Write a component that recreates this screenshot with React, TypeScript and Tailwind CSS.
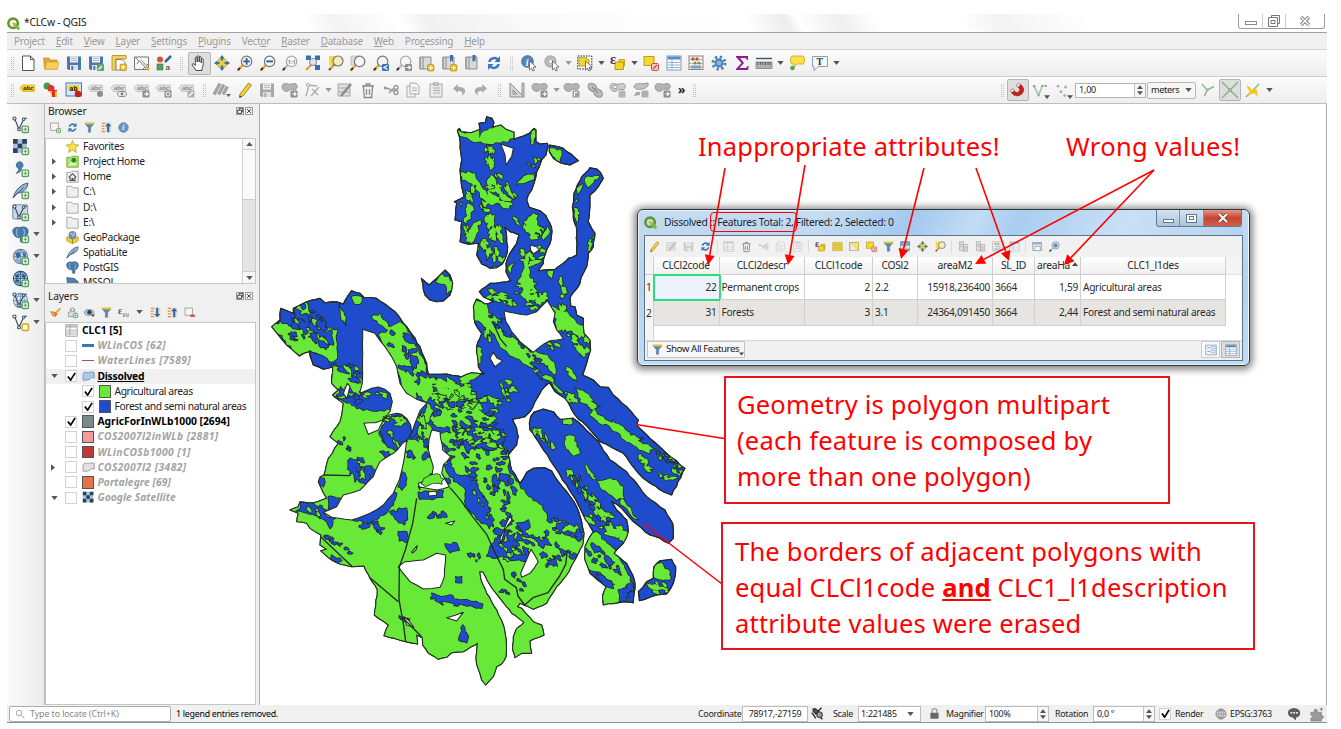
import React from "react";

/* ---------- icons, drawn on a 16 x 16 grid ---------- */
const glass = (c: string, h = "#e8a820") => (
  <>
    <path d="M1 15l5-5" stroke={h} strokeWidth="2.4" strokeLinecap="round" />
    <path d="M1 15l2-2" stroke="#333" strokeWidth="2" />
    <circle cx="9.6" cy="6.4" r="5.2" fill="#f4f6f8" stroke={c} strokeWidth="1.2" />
  </>
);
const plus = (x: number, y: number, c = "#5a9e5f") => (
  <>
    <rect x={x} y={y} width="6" height="6" rx="1" fill="#f2fbf2" stroke={c} strokeWidth="1.3" />
    <path d={`M${x + 3} ${y + 1.4}v3.2M${x + 1.4} ${y + 3}h3.2`} stroke={c} strokeWidth="1" />
  </>
);
const star = (x: number, y: number) => (
  <>
    <rect x={x} y={y} width="6.5" height="6.5" rx="1.2" fill="#e6b422" stroke="#b88a10" strokeWidth=".6" />
    <path d={`M${x + 3.2} ${y + 1}v4.4M${x + 1} ${y + 3.2}h4.4`} stroke="#fff" strokeWidth="1.2" />
  </>
);
const greyBadge = (x: number, y: number) => (
  <>
    <rect x={x} y={y} width="7" height="7" rx="1.2" fill="#8d8d8d" />
    <path d={`M${x + 1.5} ${y + 3.5}h4M${x + 3.6} ${y + 1.6}l2 1.9-2 1.9`} stroke="#fff" strokeWidth="1.1" fill="none" />
  </>
);
const floppy = (c: string) => (
  <>
    <path d="M1 1.5h14v13.5H2.5L1 13.5z" fill={c} />
    <rect x="4" y="1.5" width="8" height="6" fill="#eef1f4" />
    <path d="M5 3.4h6M5 5.4h6" stroke="#aaa" strokeWidth=".8" />
    <rect x="4" y="10" width="8" height="5" fill="#dde2e8" />
    <rect x="5.3" y="11" width="2" height="4" fill={c} />
  </>
);
const label = (c: string, t: string) => (
  <>
    <path d="M0 6l2.500-3H14.500v6.500H2.500z" fill={c} stroke={t === "#222" ? "#c9a300" : "#aaa"} strokeWidth=".6" />
    <text x="3" y="8.300" fontSize="6" fontWeight="700" fontStyle="italic" fontFamily="Liberation Sans, sans-serif" fill={t}>abc</text>
  </>
);
const book = (
  <>
    <path d="M2 2h11v12H2z" fill="#d9d9d9" stroke="#8c8c8c" />
    <path d="M5 2v12M2 2v12" stroke="#8c8c8c" />
  </>
);
const shape = (
  <path d="M0 5C0 1 4 1 6.500 2c3 1 5-1.500 7.500 0 2.500 2 1 6-2 5.500-3-.5-4 0-5 1C5 10.500 0 9 0 5z" fill="#b3b3b3" stroke="#8e8e8e" strokeWidth=".8" />
);
const refresh = (
  <>
    <path d="M2.2 7A6 6 0 0 1 12 3.2L14 1v6H8.4l2-2A3.8 3.8 0 0 0 4.6 7z" fill="#3a78c0" />
    <path d="M13.8 9A6 6 0 0 1 4 12.8L2 15V9h5.6l-2 2a3.8 3.8 0 0 0 5.8-2z" fill="#3a78c0" />
  </>
);
const vee = (
  <>
    <path d="M2.5 2.5l4 10 4.5-9.5c1-1.5 2-1.3 3-.5" fill="none" stroke="#3d4d5c" strokeWidth="1.1" />
    <circle cx="2.3" cy="2.4" r="1.5" fill="#fff" stroke="#3d4d5c" />
    <circle cx="6.6" cy="12.6" r="1.3" fill="#fff" stroke="#3d4d5c" />
    <circle cx="11" cy="3" r="1.2" fill="#fff" stroke="#3d4d5c" />
  </>
);
const funnel = (
  <>
    <path d="M1.5 2.5h13L9.7 8.2V15H6.3V8.2z" fill="#5c87b8" stroke="#3f6a98" strokeWidth=".6" />
    <path d="M1.5 1h13v2.3h-13z" fill="#f0d83c" stroke="#b9a020" strokeWidth=".5" />
  </>
);
const elephant = (
  <>
    <path d="M.8 4c1-3 4-3.200 6.500-2.500 3-1.300 7.900-.8 7.900 3.500 0 2-1 4-2 5l-2.200.3V14c0 1.800-3 2-3.200 0v-4l-1.600 1-1.600-.4C2 10 .4 6 .8 4z" fill="#4a7aac" stroke="#2f5680" strokeWidth=".7" />
    <path d="M5 2.500c-1 3-1 5 .5 7.500M10.800 2.500c1.500 3 1 5-.2 7.500" stroke="#c7d8ea" strokeWidth=".7" fill="none" />
  </>
);
const feather = <path d="M1 15C3 8 8 2 15 1c0 4-3 7-5 8-2 1-4 1.500-5 1.500zM1 15L11 5" fill="#8fb4d8" stroke="#40566c" strokeWidth=".9" />;
const globe = (c = "#8fb5da", s = "#3d668f") => (
  <>
    <circle cx="8" cy="8" r="6.7" fill={c} stroke={s} />
    <path d="M8 1.3v13.4M1.3 8h13.4M3 4h10M3 12h10M8 1.3c-5 4-5 9 0 13.4M8 1.3c5 4 5 9 0 13.4" fill="none" stroke={s} strokeWidth=".7" />
  </>
);
const raster = (
  <>
    <rect x="1" y="1" width="13" height="13" fill="#a9c1da" />
    <path d="M1 1h4.3v4.3H1zM9.6 1H14v4.3H9.6zM5.3 5.3h4.3v4.3H5.3zM1 9.6h4.3V14H1zM9.6 9.6H14V14H9.6z" fill="#27415f" />
  </>
);
const selBox = <rect x="1" y="1.5" width="10" height="9" fill="#f7d72e" stroke="#a98d10" strokeWidth=".8" />;
const gtable = (c: string, s: string) => (
  <>
    <rect x="1" y="1" width="14" height="14" fill="#fff" stroke={s} />
    <rect x="1.500" y="1.500" width="13" height="3" fill={c} />
    <path d="M1.5 7.5h13M1.5 10h13M1.5 12.5h13M6 2v12" stroke={s} strokeWidth=".8" />
  </>
);
const cursor = <path d="M8.5 6l6.5 6-3 .4 1.4 2.8-1.6.8-1.4-2.9-2 1.9z" fill="#fff" stroke="#444" strokeWidth=".7" />;

const ICONS: Record<string, React.ReactNode> = {
  new: <path d="M2.5 1h8l3.5 3.5V15.500H2.500zM10.500 1v3.500H14" fill="#fff" stroke="#555" />,
  open: (
    <>
      <path d="M0.500 3h5.500l1.500 2H14v9H1.500z" fill="#d8a93a" stroke="#b98818" strokeWidth=".6" />
      <path d="M2 14.300L3.500 7H16l-1.500 7.300z" fill="#f8cf58" stroke="#c79b2c" strokeWidth=".6" />
    </>
  ),
  save: floppy("#4c79a8"),
  saveas: <>{floppy("#4c79a8")}<rect x="9" y="9" width="7" height="7" rx="1" fill="#5fa567" /><path d="M10.500 14.500l3.500-3.500" stroke="#fff" strokeWidth="1.400" /></>,
  layout: (
    <>
      <path d="M1 .5h14v3.500H5v11H1z" fill="#f2d35c" stroke="#a88a20" strokeWidth=".8" />
      <path d="M5 4.500h6l3 3V15H5z" fill="#fff" stroke="#777" strokeWidth=".9" />
      {star(9, 9)}
    </>
  ),
  layoutmgr: (
    <>
      <path d="M.5 2h14v12.500H.5z" fill="#f5f5f5" stroke="#777" />
      <path d="M1 2l4 4-2 3M9 14l5-5" stroke="#5580aa" fill="none" />
      <path d="M6 5.500l7 7" stroke="#888" strokeWidth="2.600" /><path d="M6 5.500l7 7" stroke="#eee" strokeWidth="1.200" /><path d="M12 12l3 3" stroke="#e4b430" strokeWidth="3" />
    </>
  ),
  style: (
    <>
      <circle cx="4" cy="4.500" r="3" fill="#d8532c" /><path d="M9 7l6-6" stroke="#3a6591" strokeWidth="2.500" />
      <rect x="1" y="9" width="6" height="6" fill="#5a9e5f" stroke="#3c7440" strokeWidth=".6" />
      <text x="9.500" y="15" fontSize="8" fontFamily="Liberation Sans, sans-serif" fill="#222">a</text>
    </>
  ),
  hand: (
    <path d="M5 15.500c-1-2-3-4-3.700-5.500-.5-1.300.8-1.800 1.800-.8l1.200 1.300V3.200c0-1.400 1.900-1.400 1.900 0V7 1.800c0-1.400 2-1.400 2 0V7l.1-4.500c0-1.300 1.900-1.300 1.900 0V8l.2-3.600c.1-1.200 1.800-1.100 1.800.1 0 4 .2 7-1.200 9v2z" fill="#fff" stroke="#333" strokeWidth=".9" />
  ),
  pan: (
    <>
      <path d="M4 4h8v8H4z" fill="#f0d03a" stroke="#b99818" strokeWidth=".5" />
      <path d="M8 0l2.600 3.400H9v2H7v-2H5.400zM8 16l-2.600-3.400H7v-2h2v2h1.600zM0 8l3.400-2.600V7h2v2h-2v1.600zM16 8l-3.400-2.600V7h-2v2h2v1.600z" fill="#3b6fa5" />
    </>
  ),
  zin: <>{glass("#777")}<path d="M9.600 3v6.800M6.200 6.400H13" stroke="#2b62a0" strokeWidth="1.900" /></>,
  zout: <>{glass("#777")}<path d="M6.200 6.400H13" stroke="#2b62a0" strokeWidth="1.900" /></>,
  z1: <>{glass("#aaa", "#bbb")}<text x="5.800" y="8.600" fontSize="5.500" fontWeight="700" fill="#888">1:1</text></>,
  zfull: <><path d="M1 0.500h5v4.500H1zM10 0.500h5v4.500h-5zM10 10h5v5h-5z" fill="#3b6fa5" /><path d="M4 3l8 9M12 3L5 11" stroke="#3b6fa5" strokeWidth="1.800" /><circle cx="8" cy="7" r="3.500" fill="#dfe8f1" stroke="#888" /><path d="M1 15l4-4" stroke="#e8a820" strokeWidth="2.400" /></>,
  zsel: <><path d="M1 1h8v9H1z" fill="#f5dc3c" /><path d="M1 15l5-5" stroke="#444" strokeWidth="2" /><path d="M2.500 13.500l3-3" stroke="#e8a820" strokeWidth="2.400" /><circle cx="10" cy="6" r="5" fill="#f3ecb8" stroke="#777" strokeWidth="1.200" /></>,
  zlayer: <><path d="M1 1h8v9H1z" fill="#ddd" stroke="#aaa" strokeWidth=".6" />{glass("#777")}</>,
  zlast: <>{glass("#777")}<rect x="9" y="9" width="7" height="7" rx="1" fill="#3b74b0" /><path d="M14.500 10.500l-3.600 2 3.600 2" stroke="#fff" fill="none" strokeWidth="1.200" /></>,
  znext: <>{glass("#aaa", "#bbb")}{greyBadge(9, 9)}</>,
  bmnew: <>{book}{star(9.500, 9.500)}</>,
  bmnew2: <>{book}<path d="M9 0h3v7l-1.500-1.500L9 7z" fill="#3b6fa5" />{star(9.500, 9.500)}</>,
  bm: <>{book}<path d="M8.500 0h3v7L10 5.500 8.500 7z" fill="#3b6fa5" /></>,
  refresh,
  info: <><circle cx="6.500" cy="6.500" r="6" fill="#5584b6" stroke="#365f8c" strokeWidth=".6" /><text x="4.800" y="10.500" fontSize="10" fontWeight="700" fontStyle="italic" fontFamily="Liberation Serif, serif" fill="#fff">i</text>{cursor}</>,
  action: <><circle cx="6.500" cy="6.500" r="5" fill="#d0d0d0" stroke="#b0b0b0" strokeWidth="2.400" /><circle cx="6.500" cy="6.500" r="2.500" fill="#eee" stroke="#999" />{cursor}</>,
  select: <><rect x="0.800" y="1" width="14" height="13" fill="none" stroke="#222" strokeWidth="1" strokeDasharray="1.500 1.200" /><path d="M2 4V2.500h8v2h2V11H2z" fill="#f4d52c" stroke="#a88e18" strokeWidth=".7" />{cursor}</>,
  expr: <><path d="M5 7h8.500v7.500H5z" fill="#f4d52c" stroke="#b6930c" strokeWidth=".9" /><path d="M9 7v-2.500h5.500V11h-1V7z" fill="#f4d52c" stroke="#b6930c" strokeWidth=".8" /><text x="0" y="9" fontSize="14" fontWeight="700" fontFamily="Liberation Serif, serif" fill="#5b2c70">ε</text></>,
  desel: <>{selBox}<rect x="8.500" y="8.500" width="7" height="7" rx="1.200" fill="#f7c8c8" stroke="#d04848" /><path d="M10 14l4-4" stroke="#d04848" strokeWidth="1.200" /></>,
  table: gtable("#5b8bc0", "#7b9fc6"),
  abacus: <><rect x="1" y="1" width="14" height="13.500" fill="none" stroke="#888" /><path d="M1 4.500h14M1 8.500h14M1 12h14" stroke="#999" strokeWidth=".7" /><circle cx="5" cy="4" r="1.700" fill="#d04a3a" /><circle cx="9" cy="4" r="1.700" fill="#d04a3a" /><circle cx="7" cy="8" r="1.600" fill="#5aa35c" /><circle cx="11" cy="8" r="1.600" fill="#5aa35c" /><path d="M3 10.500h10v3H3z" fill="#7d9fc4" /></>,
  gear: <><circle cx="8" cy="8" r="6" fill="none" stroke="#4a7ebb" strokeWidth="3" strokeDasharray="2.200 2.510" /><circle cx="8" cy="8" r="3.500" fill="#8eb3dd" stroke="#4a7ebb" strokeWidth="2" /></>,
  sigma: <path d="M2 1h12v4h-1c-.5-1.500-1-2-3-2H6l4 5-4.600 5H11c1.500 0 2.200-.8 2.700-2h1L14 15H2v-1l5.500-6L2 2z" fill="#8f1a96" />,
  ruler: <><path d="M0 3.500h16" stroke="#35597d" strokeWidth="1.400" /><rect x="0" y="7" width="16" height="6.500" fill="#b0b0b0" stroke="#777" strokeWidth=".7" /><path d="M2 7v3M4.500 7v3M7 7v3M9.500 7v3M12 7v3M14 7v3" stroke="#444" strokeWidth=".8" /></>,
  tip: <><path d="M3 1h11c2 0 2 8 0 8H8l-3 3V9H3C1 9 1 1 3 1z" fill="#f7e04c" stroke="#c4a81c" strokeWidth=".8" /><circle cx="3.500" cy="13" r="2.300" fill="#5a9e5f" /></>,
  text: <><path d="M0.500 1.500h15v10H6l-4 4v-4H0.500z" fill="#f2f6fa" stroke="#8296a8" strokeWidth=".9" /><text x="4.500" y="10" fontSize="9.500" fontFamily="Liberation Serif, serif" fill="#333" fontWeight="700">T</text></>,
  abc: label("#f7d72e", "#222"),
  diag: <><circle cx="4" cy="4" r="3.500" fill="#3da046" /><path d="M8 1v8H6z" fill="#e7c22a" /><circle cx="8" cy="6.500" r="3.500" fill="#d33" /><path d="M9 8h5v7H9z" fill="#d6302b" /><path d="M12 9h2v6h-2zM6 9l3 5v-5z" fill="#e9c22b" /></>,
  abcpin: <><rect x="0" y="1" width="15.500" height="13" fill="#d8e6f8" stroke="#3e79c5" /><path d="M1 6l2-3h10v6H3z" fill="#f7d72e" /><text x="3.500" y="8.500" fontSize="6.500" fontWeight="700" fill="#222">ab</text><circle cx="12" cy="12" r="3.300" fill="#c4201c" /></>,
  abcg1: <>{label("#e2e2e2", "#888")}<circle cx="12" cy="12" r="3" fill="#8a8a8a" /></>,
  abcg2: <>{label("#e2e2e2", "#888")}<ellipse cx="11" cy="12" rx="4.600" ry="2.600" fill="#eee" stroke="#888" /><circle cx="11" cy="12" r="1.400" fill="#777" /></>,
  abcg3: <>{label("#e2e2e2", "#888")}{greyBadge(8.500, 8.500)}</>,
  abcg4: <>{label("#e2e2e2", "#888")}<rect x="8.500" y="8.500" width="7" height="7" rx="1" fill="#8d8d8d" /><circle cx="12" cy="12" r="2" fill="none" stroke="#fff" /></>,
  abcg5: <>{label("#e2e2e2", "#888")}<rect x="8.500" y="8.500" width="7" height="7" rx="1" fill="#b0b0b0" /><path d="M10 14l4-4" stroke="#fff" strokeWidth="1.500" /></>,
  pens: <><path d="M0 12.500L6 1.500M4.500 12.500L10 2.500M9 12.500l4.500-8" stroke="#a3a3a3" strokeWidth="3.400" /><path d="M12 12h5l-2.500 3z" fill="#666" /></>,
  pencil: <><path d="M3 12L11.500 1l3 2L6 14l-3.500 1.500z" fill="#f2cf3a" stroke="#8f7615" strokeWidth=".8" /><path d="M2.500 15.500l.3-2L4.500 15z" fill="#222" /></>,
  saveg: floppy("#a8a8a8"),
  shapeg: <>{shape}{greyBadge(8.500, 8.500)}</>,
  shapeh: <>{shape}<rect x="8.500" y="8.500" width="7" height="7" rx="1.200" fill="#a0a0a0" /><path d="M10.500 14v-3.500h3" stroke="#fff" fill="none" /></>,
  shapei: <><path d="M0 5C0 1 4 1 6.500 2c3 1 5-1.500 7.500 0 2.500 2 1 6-2 5.500-3-.5-4 0-5 1C5 10.500 0 9 0 5z" fill="#cfcfcf" stroke="#999" /><ellipse cx="5" cy="5" rx="2.500" ry="1.800" fill="#eee" stroke="#999" /><rect x="8.500" y="8.500" width="7" height="7" rx="1.200" fill="#b5b5b5" /></>,
  vert: <><path d="M2 3l10 1M4 3L1 14M14 5L6 14M7 7l6 6" stroke="#aaa" strokeWidth="1.300" fill="none" /><circle cx="3" cy="3" r="1.600" fill="#eee" stroke="#aaa" /></>,
  edit: <><rect x="1" y="2" width="12" height="12" fill="#ddd" stroke="#aaa" /><path d="M1 6h12M1 10h12" stroke="#aaa" /><path d="M4 14L14 2" stroke="#8b8b8b" strokeWidth="2.500" /></>,
  trash: <path d="M2 4h12M6 4V2h4v2M3.500 4.500l.8 11h7.400l.8-11M6.500 7v6M9.500 7v6" fill="none" stroke="#8a8a8a" strokeWidth="1.300" />,
  cut: <><path d="M1 5l10 4M1 6.500h3M6 11l5-5" stroke="#9b9b9b" strokeWidth="1.500" /><circle cx="13" cy="5.500" r="2" fill="none" stroke="#9b9b9b" strokeWidth="1.400" /><circle cx="13" cy="10.500" r="2" fill="none" stroke="#9b9b9b" strokeWidth="1.400" /></>,
  copy: <path d="M5 1h6l3 3v8H5zM5 4H2v11h8v-3M7 6h5M7 8.500h5" fill="#f5f5f5" stroke="#aaa" />,
  paste: <><rect x="2" y="2" width="12" height="13" fill="#ececec" stroke="#aaa" /><path d="M5.500 0.800h5v2.500h-5zM5 6h7M5 8.500h7M5 11h7" stroke="#aaa" fill="#ccc" /></>,
  undo: <path d="M2 6.500l5-4.500v3c6 0 7.500 2 7 5-.5 2-2 3-3.500 3.500 2-2.500 1-4.500-3.500-4.500V11z" fill="#ababab" />,
  redo: <path d="M14 6.500l-5-4.500v3c-6 0-7.500 2-7 5 .5 2 2 3 3.500 3.500-2-2.500-1-4.500 3.500-4.500V11z" fill="#ababab" />,
  setsq: <path d="M1 1v14h14zM4 8v4h4zM15 15V1h-2v12" fill="#d5d5d5" stroke="#8f8f8f" />,
  chain: <><ellipse cx="5.500" cy="5.500" rx="5" ry="3.600" transform="rotate(40 5.500 5.500)" fill="#bbb" stroke="#8e8e8e" /><ellipse cx="11" cy="11" rx="5" ry="3.600" transform="rotate(40 11 11)" fill="#bbb" stroke="#8e8e8e" /><path d="M5 5l6 6" stroke="#777" /></>,
  split: <><path d="M1 5c0-4 6-4 8-3l6-1c1 3-2 5-4 5.500S4 9 1 5z" fill="#c2c2c2" stroke="#999" /><rect x="8.500" y="8.500" width="7" height="7" rx="1.200" fill="#b0b0b0" /><path d="M1 14c1-4 3-5 6-4v3z" fill="#aaa" /></>,
  magnet: <><path d="M10.500 2.500c5 3.500 3.500 9.500-1.500 11-3 1-6-.3-7.500-3l2.800-1.700c1 1.800 2.700 2.200 4.200 1.200 1.800-1.300 1.600-3.400-.3-4.700z" fill="#cf1a1a" stroke="#8c0d0d" strokeWidth=".6" /><path d="M8.200 5.300l2.300-2.800L8.300 1 6.300 3.900zM4.300 8.800l-2.800 1.700L.4 8.200 3.200 6.700z" fill="#fff" stroke="#a33" strokeWidth=".6" /></>,
  snapv: <><path d="M2 3l5 10L11 3l4 0" fill="none" stroke="#9ccb9c" strokeWidth="1.700" /><path d="M1 2h2.500v2.500H1zM10 2h2v2h-2zM6 12h2v2H6zM14 2h2v2h-2z" fill="#999" /></>,
  snapd: <path d="M2 2h2.600v2.600H2zM10 3h2.600v2.600H10zM5 8h2.600v2.600H5zM9 12h2.600v2.600H9z" fill="#aaa" />,
  topo: <><path d="M1 1l6 7 8-4M7 8L4 15" stroke="#86bd86" strokeWidth="1.700" fill="none" /><path d="M5.500 6.500h3v3h-3z" fill="#aaa" /></>,
  inter: <><path d="M0 0l16 16M16 0L0 16" stroke="#86bd86" strokeWidth="1.700" /><path d="M6.500 6.500h3v3h-3z" fill="#bbb" stroke="#888" strokeWidth=".5" /></>,
  trace: <><path d="M1 15L15 1" stroke="#86bd86" strokeWidth="1.500" /><path d="M1 2l5 3 1 3 5-3 1 6 1 4-4-4-4 1-3 2 2-5z" fill="#f3c81c" /></>,
  vadd: <>{vee}{plus(9.500, 9.500)}</>,
  rasteradd: <>{raster}{plus(9.500, 9.500)}</>,
  comma: <><path d="M4 5a3.200 3.200 0 1 1 5 2.500C9 10 7 12 4 12.500c2-1.500 2.600-3 2.500-4.400A3.200 3.200 0 0 1 4 5z" fill="#4d7db0" stroke="#30567e" strokeWidth=".7" />{plus(9.500, 9.500)}</>,
  feathadd: <>{feather}{plus(9.500, 9.500)}</>,
  vbox: <><rect x=".7" y=".7" width="14" height="13.500" rx="1.500" fill="#c8d8e8" stroke="#7a95ad" />{vee}{plus(9.500, 9.500)}</>,
  pgadd: <>{elephant}{plus(9.500, 9.500)}</>,
  wmsadd: <>{globe("#b9cfe4", "#6688aa")}<path d="M3 5l4-1 1 3-2 3-2-2zM10 4l3 1v3l-2 1z" fill="#3d6a98" />{plus(9.500, 9.500)}</>,
  wcsadd: <>{globe("#cfe0f0", "#24507c")}<path d="M3 5h4v2H3zM9 5h4v2H9zM3 9h4v2H3z" fill="#24507c" />{plus(9.500, 9.500)}</>,
  wfsadd: <>{globe("#d5e4f2", "#6f95ba")}{vee}{plus(9.500, 9.500)}</>,
  vnew: <>{vee}<rect x="9.500" y="9.500" width="6" height="6" rx="1" fill="#fff8d0" stroke="#d3a91c" strokeWidth="1.400" /></>,
  addsel: <><rect x="1" y="1.500" width="11" height="10.500" fill="#f5f5f5" stroke="#888" />{plus(9.500, 9.500)}</>,
  funnel,
  collapse: <><path d="M1 2h5M1 6h4M1 10h4M1 14h5" stroke="#e58b2a" strokeWidth="2" /><path d="M6 1h9v14H6z" fill="#d9dee4" /><path d="M10.500 1l4.500 5h-3v9H9V6H6z" fill="#3b6591" /></>,
  expand: <><path d="M1 2h5M1 6h4M1 10h4M1 14h5" stroke="#e58b2a" strokeWidth="2" /><path d="M6 1h9v14H6z" fill="#d9dee4" /><path d="M10.500 15l4.500-5h-3V1H9v9H6z" fill="#3b6591" /></>,
  infob: <><circle cx="8" cy="8" r="6.800" fill="#6a96c4" stroke="#3d6a98" /><text x="6" y="12" fontSize="11" fontStyle="italic" fontWeight="700" fontFamily="Liberation Serif, serif" fill="#fff">i</text></>,
  brush: <><path d="M8 9l7-7" stroke="#e8a838" strokeWidth="3" /><path d="M0 6l6 1 5 3-3 4-4-1z" fill="#d9622c" /><path d="M3 8l4 4" stroke="#f4d03a" strokeWidth="2" /></>,
  group: <><path d="M2 14V8l3-1V3h6v4l2 1v6z" fill="#d9dde1" stroke="#7a848e" /><circle cx="8" cy="4" r="2.500" fill="#eee" stroke="#777" />{plus(9.500, 9.500)}</>,
  eye: <><ellipse cx="7.500" cy="8" rx="7" ry="4.300" fill="#b4c4d4" stroke="#7b8896" /><circle cx="8" cy="7.500" r="3.300" fill="#28425e" /><path d="M10 11h6l-3 4z" fill="#555" /></>,
  eps: <><text x="0" y="10.500" fontSize="14" fontWeight="700" fontFamily="Liberation Serif, serif" fill="#5a4a66">ε</text><path d="M8 9v5h2v-4h3v4h2V9" fill="none" stroke="#777" /></>,
  remove: <><rect x="1.500" y="1.500" width="11" height="10.500" fill="#f5f5f5" stroke="#888" /><rect x="9" y="11" width="7" height="3.500" rx="1" fill="#e24a4a" /></>,
  fav: <path d="M8 .6l2.100 5.200 5.600.4-4.300 3.600 1.400 5.500L8 12.300l-4.800 3 1.400-5.500L.3 6.200l5.600-.4z" fill="#fbe548" stroke="#b09a18" strokeWidth=".9" />,
  phome: <><path d="M1 3h5l1.500-1.500H15V15H1z" fill="#b7e36a" stroke="#6d9a34" /><path d="M3 13l5-6 5 5z" fill="#e9f5c9" /><circle cx="9.500" cy="6.500" r="3" fill="#1f8a2c" /></>,
  home: <><path d="M1 3h5l1.500-1.500H15V15H1z" fill="#f1f1f1" stroke="#909090" /><path d="M3.500 9L8 4.500 12.500 9M5 8.500V13h6V8.500M7.500 13v-2.500h1V13" fill="none" stroke="#444" strokeWidth="1.300" /></>,
  folder: <path d="M1 3.500V1.500h6L8.500 3.500H15V15H1z" fill="#efefef" stroke="#9a9a9a" />,
  gpkg: <><path d="M1 7l7 3 7-3v5l-7 3.600L1 12z" fill="#f3d12c" stroke="#94780c" strokeWidth=".7" /><path d="M8 10v5.500" stroke="#94780c" /><circle cx="8" cy="5" r="4.500" fill="#6f96bf" stroke="#3a5b7c" strokeWidth=".7" /><path d="M5 3l3 1 1 3M10 2l1 3" stroke="#dfe9f2" fill="none" /></>,
  feather,
  pg: elephant,
  mssql: <path d="M1 2l9 1 5 4-1 8H5L2 10z" fill="#5480ae" stroke="#31557c" />,
  tableg: gtable("#bdbdbd", "#8d8d8d"),
  poly: <path d="M1.500 4c3-3 5 0 7.500-1s4-1 6 0v7c-2-1-4-1-5 1s-6 1-8 2c-1 0-1-6-.5-9z" fill="#a9c9ea" stroke="#6b8eb4" />,
  polyg: <path d="M1.500 4c3-3 5 0 7.500-1s4-1 6 0v7c-2-1-4-1-5 1s-6 1-8 2c-1 0-1-6-.5-9z" fill="#e2e2e2" stroke="#8d8d8d" />,
  raster,
  selall: <path d="M1 2h14v3H1zM1 6.500h14v3H1zM1 11h14v3H1z" fill="#f4d52c" stroke="#b6930c" strokeWidth=".7" />,
  inv: <><rect x="1" y="2" width="13" height="12" fill="#f4e37a" stroke="#b59f2c" /><path d="M2 3v10.500h11.500z" fill="#eee" stroke="#bbb" strokeWidth=".6" /></>,
  movetop: <><rect x="1" y="1" width="13" height="13" fill="#7fa7d3" stroke="#54779f" /><path d="M1 7h13v4H1z" fill="#dfe6c0" /></>,
  dock: <><rect x="1" y="2" width="13" height="12" fill="#e3e8ee" stroke="#8796a6" /><path d="M1 2h13v3H1z" fill="#9fb0c2" /><path d="M4 8h8v6H4z" fill="#fff" stroke="#8796a6" /></>,
  zoomact: <>{glass("#7a8ca0", "#bbb")}<circle cx="9.500" cy="6.500" r="3.400" fill="#5f8fc4" /></>,
  colg: <><path d="M2 1h6v13H2zM8 5h6v10H8z" fill="#dedede" stroke="#aaa" /><path d="M3 5h4M3 8h4M9 9h4M9 12h4" stroke="#aaa" /></>,
  form: <><rect x="1" y="1.500" width="14" height="13" fill="#eef4fb" stroke="#7d9cc0" /><path d="M3 5h4M3 10h4" stroke="#888" /><path d="M8.500 3.500h5v3h-5zM8.500 8.500h5v3h-5z" fill="#fff" stroke="#7d9cc0" strokeWidth=".8" /></>,
  lock: <><path d="M4.500 8V4.500a3.500 3.500 0 0 1 7 0V8" fill="none" stroke="#999" strokeWidth="1.800" /><rect x="2" y="7" width="12" height="8.500" rx="1" fill="#696969" /></>,
  mouse: <><path d="M2 2l12 13M13 1L5 9M1 7l5 7" stroke="#222" strokeWidth="1.600" fill="none" /><ellipse cx="5.500" cy="5" rx="3.400" ry="2.600" transform="rotate(40 5.500 5)" fill="#555" stroke="#111" /><circle cx="10.500" cy="9.500" r="3.600" fill="#999" stroke="#111" /></>,
  globeg: globe("#dcdcdc", "#6d6d6d"),
  bubble: <><path d="M8 1c9 0 9 10 2.500 11L10 15.500 6.500 12C-1 11-1 1 8 1z" fill="#5d5d5d" /><path d="M4 6.500h2M7.200 6.500h2M10.400 6.500h2" stroke="#fff" strokeWidth="1.800" /></>,
  puzzle: <><path d="M1 6h4c-2-4 4-5 3.500-1V6H13v4c3-1.500 3 4 0 3v3H1v-3.500c3 .5 3-4 0-3z" fill="#9a9a9a" stroke="#777" strokeWidth=".7" /><path d="M13 .5v4M11 2.500h4" stroke="#777" /></>,
  search: <><circle cx="6.500" cy="6.500" r="4.500" fill="none" stroke="#999" strokeWidth="1.300" /><path d="M10 10l5 5" stroke="#999" strokeWidth="1.500" /></>,
  q: <><circle cx="7.500" cy="7.800" r="5.800" fill="none" stroke="#5b9a2b" strokeWidth="3.200" /><path d="M8.500 8.500l6.500 6.500" stroke="#7ab648" strokeWidth="3.600" /><path d="M7 7l3.500 3.500" stroke="#e8a93a" strokeWidth="2.600" /></>,
};

const sizes = { 10: "size-[10px]", 11: "size-[11px]", 12: "size-[12px]", 13: "size-[13px]", 14: "size-[14px]", 15: "size-[15px]", 16: "size-[16px]", 17: "size-[17px]" };
const Icon = ({ n, s = 16, dim }: { n: string; s?: keyof typeof sizes; dim?: boolean }) => (
  <svg viewBox="0 0 16 16" className={`${sizes[s]} shrink-0 overflow-visible ${dim ? "opacity-50" : ""}`} fill="none">
    {ICONS[n]}
  </svg>
);
const Down = ({ c = "w-[11px]", g }: { c?: string; g?: boolean }) => (
  <span className={`${c} flex shrink-0 justify-center`}>
    <svg viewBox="0 0 8 5" className="h-[4px] w-[7px]"><path d="M0 0h8L4 5z" fill={g ? "#999" : "#555"} /></svg>
  </span>
);
const Grip = ({ c = "w-[9px]" }: { c?: string }) => (
  <span className={`${c} flex shrink-0 justify-center`}>
    <span className="h-[13px] w-[3px] border-x border-dotted border-[#bdbdbd]" />
  </span>
);
const Cells = ({ names }: { names: string[] }) => (
  <>
    {names.map((n) => (
      <span key={n} className="flex w-[22.7px] shrink-0 justify-center"><Icon n={n} /></span>
    ))}
  </>
);

/* ---------- map ---------- */
let seed = 7;
const rnd = () => {
  seed = (seed * 16807) % 2147483647;
  return seed / 2147483647;
};
type P = [number, number];
const pts = (s: string): P[] => s.trim().split(/\s+/).map((p) => p.split(",").map(Number) as P);
const jag = (s: string, amp: number, step: number) => {
  const a = pts(s);
  const out: string[] = [];
  a.forEach((p, i) => {
    const q = a[(i + 1) % a.length];
    const len = Math.hypot(q[0] - p[0], q[1] - p[1]);
    const n = Math.max(1, Math.round(len / step));
    for (let k = 0; k < n; k++) {
      const t = k / n;
      const j = k === 0 ? 0 : amp;
      out.push(`${(p[0] + (q[0] - p[0]) * t + (rnd() - 0.5) * 2 * j).toFixed(1)},${(p[1] + (q[1] - p[1]) * t + (rnd() - 0.5) * 2 * j).toFixed(1)}`);
    }
  });
  return "M" + out.join("L") + "Z";
};
const blob = (x: number, y: number, r: number, ang: number) => {
  const n = 10;
  const c = Math.cos(ang), s = Math.sin(ang);
  const out: string[] = [];
  for (let i = 0; i < n; i++) {
    const a = (i / n) * Math.PI * 2;
    const k = r * (0.35 + rnd() * 1.1);
    const u = Math.cos(a) * k * 1.6, v = Math.sin(a) * k * 0.8;
    out.push(`${(x + u * c - v * s).toFixed(1)},${(y + u * s + v * c).toFixed(1)}`);
  }
  return "M" + out.join("L") + "Z";
};
/* x1, y1, x2, y2, spread, count, radius */
type Cl = [number, number, number, number, number, number, number];
const cluster = ([x1, y1, x2, y2, w, n, r]: Cl) => {
  const ang = Math.atan2(y2 - y1, x2 - x1);
  let d = "";
  for (let i = 0; i < n; i++) {
    const t = rnd(), o = (rnd() - 0.5) * 2 * w;
    d += blob(x1 + (x2 - x1) * t - Math.sin(ang) * o, y1 + (y2 - y1) * t + Math.cos(ang) * o, r * (0.4 + rnd()), ang + (rnd() - 0.5) * 1.4);
  }
  return d;
};
const shift = (s: string, dx: number, dy: number) => pts(s).map(([x, y]) => `${x + dx},${y + dy}`).join(" ");
const C = (s: string) => shift(s, 570, 870);
const B = (s: string) => shift(s, 0, 870);

const MAIN = [
  "598,85 604,95 632,98 660,88 657,70 676,67 680,50 696,55 702,68 698,80 722,75 738,88 762,97 762,118 790,108 808,100 822,85 828,90 828,125 840,132 862,130 864,140 858,165 845,180 838,200 830,215 822,250 815,270 805,285 800,300 808,322 840,332 858,347 870,370 876,395 873,420 862,445 855,465 850,490 835,512 885,508 905,493 925,475 950,465 951,430 949,380 940,355 937,320 942,280 952,255 965,230 985,210 990,203 1010,207 1022,218 1030,235 1015,260 990,285 990,320 985,365 1005,400 1000,440 985,460 980,500 970,520 955,560 930,592 932,618 945,620 950,645 970,655 972,700 990,720 992,750 980,790 968,825 1000,840 1020,860 1045,862 1060,885",
  C("490,15 530,50 565,90 560,105 600,145 650,190 705,235 665,315 640,305 580,265 545,225 520,190 500,180 450,155 420,120 375,75 345,25 315,5 298,-22 275,0 255,35 240,65 225,80 187,88 200,115 205,140 200,165 175,195 185,240 210,280 230,247 250,235 285,233 305,243 325,275 350,305 380,350 395,395 402,430 398,465 385,490 350,555 320,590 290,640 250,658 210,640 203,650 215,655 232,675 250,695 275,705 282,735 240,752 245,790 215,790 195,803 188,780 190,740 200,715 222,697 185,670 150,625 120,585 98,545 89,545 93,570 110,610 140,660 160,705 168,745 168,800 155,822 140,830 130,860 107,885 95,870 82,830 78,800 82,760"),
  B("645,765 610,785 575,788 560,802 535,808 505,790 488,765 487,743 470,735 473,762 437,755 372,737 385,705 343,675 352,600 330,565 312,528 275,530 240,522 215,510 182,482 200,478 180,465 183,435 150,415 140,400 110,395 115,370 90,360 115,350 120,335 160,338 200,325 190,308 175,275 180,262 192,255 205,205 235,160 210,140 222,120 240,95 250,40 218,15"),
  "235,870 215,850 218,800 190,808 160,795 148,755 118,768 80,735 35,680 60,660 62,625 100,640 100,625 140,605 180,595 195,608 230,605 250,612 262,590 275,572 300,580 312,592 350,595 405,635 440,680 480,740 500,790 505,822 560,822 605,830 635,818 670,822 655,800 650,740 665,700 645,670 640,620 650,597 675,612 700,605 672,592 658,575 690,550 740,545 752,542 738,515 738,490 750,460 770,430 777,405 750,395 735,382 740,410 743,440 738,470 727,492 710,503 690,505 665,492 650,465 655,430 625,433 600,425 605,365 585,360 590,310 583,305 612,290 605,260 600,210 605,180 598,110 592,92",
].join(" ");
const PARTS = [
  MAIN,
  "484,535 508,555 530,535 555,510 570,525 578,550 570,585 550,603 530,605 510,600 495,585",
  "868,135 885,138 910,145 955,182 930,195 905,190 880,175 868,155",
  C("238,100 242,80 252,66 280,57 310,65 330,88 370,85 400,110 445,155 480,210 530,245 560,280 590,320 645,360 668,400 670,445 655,460 630,445 600,435 550,395 515,355 485,335 500,360 530,390 535,425 520,460 492,490 530,520 548,555 555,580 550,638 520,635 460,645 458,615 468,590 420,550 405,510 405,470 430,425 400,375 375,325 330,255 300,210 265,155 240,120"),
  C("565,605 590,575 610,565 612,530 630,512 665,508 677,530 675,560 670,580 650,612 620,615 568,632"),
];
const HOLES = [
  "732,632 765,640 800,645 830,635 862,602 885,640 880,665 890,690 910,717 870,722 840,740 820,757 780,725 755,695 738,665",
  "722,132 760,145 755,170 738,195 735,165",
  "308,688 345,700 375,740 395,770 410,800 420,850 440,880 470,898 502,908 480,932 463,975 455,1000 452,975 440,955 425,943 410,940 390,944 372,958 355,990 325,1003 312,970 345,968 370,960 390,935 397,905 390,880 375,868 355,861 335,865 300,880 300,875 307,850",
  B("440,150 400,190 360,215 340,260 300,300 250,315 230,350 190,367 215,382 275,390 330,370 370,345 400,310 418,270 430,220"),
  B("515,120 540,125 548,180 572,200 550,225 545,250 568,290 530,300 475,290 480,300 475,280 515,265 520,230 505,180 507,150"),
  B("415,530 435,515 490,510 530,490 557,495 553,560 540,592 490,597 450,575"),
  B("560,683 610,667 590,693"),
  B("455,485 472,467 468,480 457,489"),
  B("432,682 445,690 462,712 440,705"),
  B("505,306 528,303 530,316 507,318"),
  B("557,400 584,393 575,405"),
  C("243,478 265,515 240,550 215,562 212,550"),
  C("180,378 186,390 165,420 152,460 150,445"),
  "690,775 700,757 712,775 728,782 705,800",
  "810,435 830,440 838,450 820,462 812,450",
  "262,850 270,860 260,895 250,880",
];
const GREENS = [
  "592,90 604,95 632,98 660,88 657,115 665,98 698,85 722,73 765,95 762,115 720,128 670,130 630,120 600,108",
  "605,215 645,220 660,250 680,280 700,300 720,290 715,310 690,315 660,285 640,250 607,240",
  "625,310 640,320 632,345 620,370 612,365", "640,370 662,360 650,400 635,430 618,425 625,400",
  "690,340 705,345 690,390 680,380", "800,225 828,218 815,240 790,250 770,255 780,240", "812,90 828,88 820,135 812,130",
  "820,340 835,345 825,400 815,415 805,380 790,365", "862,378 870,395 850,420 845,410",
  "795,470 812,460 805,500 810,535 830,550 800,587 785,580 790,550 772,545 785,520", "745,500 765,488 752,520",
  "685,235 700,238 695,260 683,255", "690,165 702,200 690,210 685,185", "680,450 690,455 680,480",
  "975,235 1018,228 985,262", "950,265 968,252 955,285", "548,522 578,545 575,570 560,582 555,552 528,545",
  "868,145 900,148 905,165 900,185 880,170", "35,678 62,665 100,690 105,650 115,615 140,608 148,650 180,665 200,685 232,690 230,740 232,775 215,785 150,750 118,770",
  "238,612 250,635 258,675 242,645", "275,590 305,592 303,608 285,612", "215,795 260,800 268,790 272,830 305,825 303,870 240,895 210,890 212,850",
  "335,650 360,640 385,680 420,665 450,700 475,750 492,780 505,830 520,870 502,905 470,900 430,875 410,800 390,760 356,705 385,690",
  "600,830 635,815 672,820 640,838 615,845", "640,600 675,605 685,640 720,660 745,700 800,745 830,757 862,765 885,800 882,845 850,835 800,795 760,770 720,740 690,690 665,670 640,660",
  "652,740 665,745 662,790 650,790", "868,835 880,850 910,880 895,875", "885,630 925,640 950,670 970,675 972,712 940,700 915,685 890,690",
  "862,515 880,512 875,535", "945,865 970,872 1000,902 970,895", "920,800 945,825 950,840 925,825", "852,575 862,580 855,600 840,605",
  "530,870 560,862 590,875 620,850 635,865 620,890 560,895", "725,865 735,880 728,895",
  B("215,25 250,35 270,40 290,58 340,65 390,60 400,100 355,125 370,160 400,180 440,148 480,160 492,100 470,80 500,40 520,60 500,100 520,125 560,190 600,175 640,150 680,185 735,172 750,210 745,240 778,285 805,320 845,345 870,412 900,395 970,430 990,700 900,900 400,900 0,500 0,300"),
  C("-60,85 -20,60 20,65 70,40 100,70 140,85 120,100 70,95 20,110 -40,110"), C("-60,10 0,5 60,5 50,25 0,15"),
  C("-50,140 -10,125 40,130 30,160 -10,165"),
  C("380,0 410,10 425,35 450,50 410,42 385,20"), C("425,65 460,80 490,98 520,110 560,150 600,175 600,190 560,170 530,155 500,125 440,90"), C("665,235 700,240 690,258 672,250"),
  C("345,140 375,140 380,170 390,190 370,197 345,165"), C("440,275 480,265 520,290 522,325 500,330 450,290"), C("408,222 425,248 440,268 430,268 412,250"), C("515,325 565,388 552,385 510,335"),
  C("425,310 450,340 455,360 430,340"), C("285,130 300,165 295,170"), C("335,85 365,88 368,100 340,102"),
  C("400,430 440,425 470,460 505,500 540,560 548,590 520,600 500,640 458,645 460,590 495,585 450,545 405,535"), C("505,425 533,425 522,460 508,450"),
  C("610,525 635,518 660,545 658,570 612,562"), C("590,580 640,590 650,602 600,595"),
];
const BLUES = [
  B("362,125 380,85 420,73 450,95 454,125 430,170 410,185 380,165 370,145"), B("270,205 290,210 288,240 270,255 265,225"),
  B("425,245 435,250 438,285 425,300 415,290"), B("175,262 192,265 190,290 175,280"), B("205,320 240,325 230,350 205,360"),
  B("120,340 160,340 180,360 200,380 225,385 210,415 195,390 150,372 125,362"), B("275,388 320,372 365,350 395,305 410,310 400,345 370,375 330,395"),
  B("400,370 440,355 442,385 420,398 405,385"), B("415,425 440,425 442,455 418,452"), B("215,495 245,512 232,520 212,508"),
  B("475,307 550,303 548,322 480,328"), B("550,225 580,235 590,255 630,262 650,330 690,380 700,410 665,400 640,370 615,350 618,300 570,260"),
  B("555,462 590,460 598,480 570,488"), B("690,470 715,435 740,455 735,490 700,505 680,498"), B("515,610 545,620 570,615 590,628 640,635 668,643 665,655 620,648 580,640 530,632"),
  B("608,705 625,740 620,758 597,750"), B("587,560 605,560 605,578 587,577"), B("360,185 385,185 400,200 380,207"),
  C("150,450 195,430 185,470 240,515 180,510 140,490"), C("200,400 235,390 240,410 215,425"), C("265,455 290,450 280,475"),
  C("150,250 175,255 170,275 150,270"), C("440,550 485,575 490,595 465,590"), C("505,600 530,595 530,635 510,635"),
  "150,755 200,775 215,800 190,806 158,790", "148,670 200,700 190,705 150,690", "190,700 215,690 220,735 205,730",
  "430,700 455,705 460,730 440,725", "450,765 470,770 475,790 455,795", "725,655 755,690 750,705 730,690", "820,790 850,795 870,820 840,815",
  B("470,10 500,50 480,90 470,130 455,145 458,105"), B("600,140 640,110 730,120 735,150 700,180 650,170 620,185"),
];
const GREEN_CL: Cl[] = [
  [690, 130, 690, 200, 12, 9, 7], [690, 250, 760, 300, 40, 30, 8], [620, 260, 700, 330, 25, 16, 8], [700, 330, 700, 420, 20, 14, 8],
  [660, 430, 720, 490, 20, 13, 8], [615, 310, 620, 410, 12, 9, 7], [780, 345, 840, 400, 25, 16, 8], [790, 460, 850, 470, 25, 12, 8],
  [770, 560, 850, 600, 20, 18, 8], [680, 580, 740, 590, 14, 10, 7], [720, 600, 830, 625, 8, 12, 5], [950, 300, 950, 360, 8, 5, 6], [998, 400, 990, 450, 6, 6, 5],
  [780, 160, 830, 190, 20, 4, 4], [905, 530, 912, 600, 6, 9, 6], [890, 620, 975, 740, 22, 28, 8], [970, 740, 980, 760, 12, 8, 6],
  [860, 740, 900, 740, 15, 5, 5], [670, 680, 700, 720, 15, 9, 6], [500, 860, 640, 870, 28, 30, 9], [720, 840, 760, 890, 20, 8, 7],
  [100, 640, 230, 750, 25, 14, 8], [520, 930, 700, 970, 42, 45, 10], [520, 900, 640, 900, 20, 18, 9], [480, 960, 500, 1060, 12, 20, 7], [570, 1000, 720, 1030, 35, 35, 10],
  [300, 880, 380, 885, 10, 5, 7], [280, 800, 300, 880, 10, 10, 8], [640, 880, 720, 930, 20, 10, 8],
  [690, 1340, 850, 1390, 40, 14, 8], [880, 1270, 970, 1320, 14, 22, 9], [1000, 940, 1270, 1105, 6, 22, 6], [900, 880, 1010, 930, 10, 10, 7],
  [1130, 1060, 1190, 1130, 8, 12, 5], [1190, 1120, 1250, 1140, 8, 8, 5], [820, 980, 890, 1070, 8, 7, 6], [925, 1110, 1030, 1240, 10, 24, 7],
  [985, 1230, 1080, 1300, 26, 26, 8], [1010, 1300, 1080, 1480, 20, 12, 8], [1170, 1450, 1220, 1480, 20, 8, 6], [500, 1120, 560, 1150, 20, 12, 8],
];
const BLUE_CL: Cl[] = [
  [110, 640, 210, 720, 35, 32, 8], [90, 700, 130, 720, 12, 8, 5], [220, 780, 300, 830, 18, 10, 7], [240, 870, 300, 900, 14, 10, 6],
  [380, 710, 460, 740, 20, 8, 6], [420, 750, 480, 860, 25, 8, 7], [690, 650, 760, 720, 8, 14, 5], [820, 780, 880, 840, 20, 16, 6],
  [280, 1080, 340, 1150, 25, 28, 7], [120, 1220, 200, 1230, 12, 11, 8], [200, 1310, 280, 1360, 6, 12, 4], [310, 1270, 370, 1285, 14, 12, 6],
  [410, 1230, 440, 1265, 16, 12, 6], [515, 1245, 560, 1245, 8, 9, 5], [560, 1000, 740, 1080, 40, 36, 6], [560, 1080, 760, 1190, 55, 38, 4],
  [640, 1170, 700, 1270, 12, 18, 8], [700, 1110, 760, 1220, 30, 18, 6], [720, 1270, 820, 1360, 38, 32, 8], [840, 1310, 880, 1390, 30, 14, 6],
  [880, 1270, 970, 1320, 16, 12, 7], [640, 1360, 640, 1385, 18, 9, 3], [510, 1140, 560, 1145, 12, 8, 6], [440, 1050, 460, 1080, 10, 7, 6],
  [240, 1010, 270, 1060, 10, 5, 4], [420, 1550, 440, 1560, 5, 4, 5], [520, 1495, 600, 1510, 7, 10, 6], [480, 940, 510, 1090, 10, 14, 6],
  [1000, 1340, 1100, 1480, 25, 22, 7], [780, 730, 830, 780, 8, 7, 4], [520, 930, 700, 970, 42, 30, 6], [640, 1160, 640, 1160, 60, 6, 6],
  [1150, 1010, 1260, 1110, 8, 9, 4], [930, 1120, 1050, 1280, 14, 14, 5], [740, 1440, 790, 1470, 40, 8, 4], [890, 1330, 940, 1380, 16, 8, 5],
];
/* small green patches that lie inside the blue areas */
const TOP_CL: Cl[] = [
  [375, 965, 445, 965, 16, 16, 6], [385, 1000, 430, 1040, 12, 8, 5], [600, 1015, 735, 1015, 26, 32, 7], [475, 900, 490, 1000, 10, 16, 5],
  [530, 900, 680, 900, 24, 16, 6], [720, 1310, 760, 1370, 20, 10, 5], [620, 1130, 690, 1260, 5, 6, 4], [130, 1215, 190, 1245, 7, 6, 4],
];
const G = "#68e938", BL = "#1f4ccc", K = "#222c22";
const body = PARTS.map((p) => jag(p, 1.6, 16)).join("");
const greens = GREENS.map((p) => jag(p, 4.500, 10)).join("");
const blues = BLUES.map((p) => jag(p, 3.5, 9)).join("");
const holes = HOLES.map((p) => jag(p, 1.2, 22)).join("");
const gcl = GREEN_CL.map(cluster).join("");
const bcl = BLUE_CL.map(cluster).join("");
const tcl = TOP_CL.map(cluster).join("");
const islet = jag(B("485,280 500,262 530,252 550,268 545,282 520,278 495,288"), 3, 9);

/* outline first, then fill on top, so that touching patches merge into one shape */
const Merged = ({ d, fill }: { d: string; fill: string }) => (
  <>
    <path d={d} fill={fill} strokeWidth="4.600" />
    <path d={d} fill={fill} stroke="none" />
  </>
);

const MapCanvas = () => (
  <svg viewBox="260 104 1067 600" className="block h-[600px] w-[1067px]" strokeLinejoin="round">
    <defs><clipPath id="land"><path d={body} /></clipPath></defs>
    <g transform="translate(260 100) scale(.33333)" stroke={K} strokeWidth="3.2">
      <path d={body} fill={BL} />
      <g clipPath="url(#land)">
        <Merged d={greens + gcl} fill={G} />
        <Merged d={blues + bcl} fill={BL} />
        <Merged d={tcl} fill={G} />
      </g>
      <path d={holes} fill="#fff" />
      <path d={body} fill="none" />
      <g fill="none" strokeWidth="4">
        <path d="M470 1195L458 1270 436 1350 418 1400 417 1500 430 1570 437 1625M192 1125l78 2M182 1310l95 90M330 1433l85 72M435 1560l50 50" />
        <path d="M570 1163l30 35 40 55 40 50 20 45 30 60 4 30 35 25 5 25 20 27 25-22 45-15 35-50 18-35 5-40M700 670l20 45 20 25" />
      </g>
      <Merged d={islet} fill={G} />
    </g>
  </svg>
);

/* ---------- panels ---------- */
const PanelHead = ({ t }: { t: string }) => (
  <div className="flex h-[14px] shrink-0 items-center pl-[3px] pr-[3px] text-[10.300px] tracking-[-0.200px] text-[#222]">
    <span className="flex-1 leading-[14px]">{t}</span>
    {["M2 4h5v4H2zM4 4V1.500h4.500V6H7", "M2.500 2.500l5 5M7.500 2.500l-5 5"].map((d) => (
      <svg key={d} viewBox="0 0 10 10" className="ml-[1px] size-[8px]"><path d="M.5.5h9v9h-9z" fill="none" stroke="#777" /><path d={d} fill="none" stroke="#444" strokeWidth="1.200" /></svg>
    ))}
  </div>
);
const Right = () => <svg viewBox="0 0 5 8" className="h-[7px] w-[4px]"><path d="M0 0l5 4-5 4z" fill="#555" /></svg>;
const BROWSER: [string, string, boolean][] = [
  ["fav", "Favorites", false], ["phome", "Project Home", true], ["home", "Home", true], ["folder", "C:\\", true], ["folder", "D:\\", true],
  ["folder", "E:\\", true], ["gpkg", "GeoPackage", false], ["feather", "SpatiaLite", false], ["pg", "PostGIS", false], ["mssql", "MSSQL", false],
];
const Check = ({ on }: { on?: boolean }) => (
  <span className="flex size-[12px] shrink-0 items-center justify-center border border-[#d2d2d2] bg-white">
    {on && <svg viewBox="0 0 10 10" className="size-[9px]"><path d="M1 5l3 4 5-8" fill="none" stroke="#000" strokeWidth="1.900" /></svg>}
  </span>
);
type L = { arrow?: "d" | "r"; check?: boolean | null; sw?: string; icon?: string; line?: string; t: string; k: string; sub?: boolean; sel?: boolean };
const DIS = "font-bold italic text-[#a3a3a3] tracking-[0.400px]";
const PLAIN = "text-[#222] tracking-[-0.400px]";
const LAYERS: L[] = [
  { check: null, icon: "tableg", t: "CLC1 [5]", k: "font-bold text-black" },
  { check: false, line: "h-[3px] bg-[#2a7fb8]", t: "WLinCOS [62]", k: DIS },
  { check: false, line: "h-[1px] bg-[#c8414b]", t: "WaterLines [7589]", k: DIS },
  { arrow: "d", check: true, icon: "poly", t: "Dissolved", k: "font-bold underline text-black tracking-[-0.250px]", sel: true },
  { check: true, sub: true, sw: "bg-[#68e938]", t: "Agricultural areas", k: PLAIN },
  { check: true, sub: true, sw: "bg-[#1f4ccc]", t: "Forest and semi natural areas", k: PLAIN },
  { check: true, sw: "bg-[#7a8a8c]", t: "AgricForInWLb1000 [2694]", k: "font-bold text-black tracking-[-0.020px]" },
  { check: false, sw: "bg-[#f99a9a]", t: "COS2007l2inWLb [2881]", k: DIS },
  { check: false, sw: "bg-[#c33638]", t: "WLinCOSb1000 [1]", k: DIS },
  { arrow: "r", check: false, icon: "polyg", t: "COS2007l2 [3482]", k: DIS },
  { check: false, sw: "bg-[#e57347]", t: "Portalegre [69]", k: "font-bold italic text-[#a3a3a3] tracking-[0.050px]" },
  { arrow: "d", check: false, icon: "raster", t: "Google Satellite", k: "font-bold italic text-[#a3a3a3] tracking-[0.050px]" },
];

const Spin = () => (
  <span className="flex h-full w-[11px] flex-col items-center justify-center gap-[2px] border-l border-[#c4c4c4] bg-[#f6f6f6]">
    <svg viewBox="0 0 8 5" className="h-[4px] w-[6px]"><path d="M0 5h8L4 0z" fill="#555" /></svg>
    <svg viewBox="0 0 8 5" className="h-[4px] w-[6px]"><path d="M0 0h8L4 5z" fill="#555" /></svg>
  </span>
);

const COLS: [string, string, string, string][] = [
  ["w-[66px]", "CLCl2code", "22", "31"], ["w-[85.500px]", "CLCl2descr", "Permanent crops", "Forests"], ["w-[68px]", "CLCl1code", "2", "3"],
  ["w-[45px]", "COSl2", "2.2", "3.1"], ["w-[75px]", "areaM2", "15918,236400", "24364,091450"], ["w-[42px]", "SL_ID", "3664", "3664"],
  ["w-[46px]", "areaHa", "1,59", "2,44"], ["w-[145px]", "CLC1_l1des", "Agricultural areas", "Forest and semi natural areas"],
];
const NUM = new Set(["CLCl2code", "CLCl1code", "areaM2", "areaHa"]);
const DTOOLS: [string, boolean][] = [
  ["pencil", false], ["edit", true], ["saveg", true], ["refresh", false], ["|", false], ["tableg", true], ["trash", false], ["cut", true], ["copy", true], ["paste", true], ["|", false],
  ["expr", false], ["selall", false], ["inv", false], ["desel", false], ["funnel", false], ["movetop", false], ["pan", false], ["zsel", false], ["|", false],
  ["colg", false], ["colg", false], ["abacus", true], ["table", true], ["|", false], ["dock", false], ["zoomact", false],
];

const Dialog = () => (
  <div className="absolute left-[637px] top-[209px] flex h-[157px] w-[613px] flex-col rounded-[6px] border border-[#30363d] bg-gradient-to-b from-[#c5dcf1] via-[#b3d2ef] to-[#bfdcf5] px-[6px] pb-[6px] shadow-[0_1px_7px_3px_rgba(60,60,60,0.600)] ring-1 ring-inset ring-[#e8f3fd]">
    <div className="flex h-[25px] shrink-0 items-center bg-[linear-gradient(115deg,transparent_0%,transparent_30%,#a3c9ee_45%,#c3dcf4_55%,#a9cdf0_62%,#c9e0f6_80%,#b5d3ef_100%)]">
      <Icon n="q" s={13} />
      <span className="ml-[7px] flex-1 text-[10.300px] tracking-[-0.310px] text-[#1c2530]">Dissolved :: Features Total: 2, Filtered: 2, Selected: 0</span>
      <div className="mr-[1px] flex h-[17px] self-start overflow-hidden rounded-b-[3px] border border-t-0 border-[#65798d]">
        <span className="flex w-[23px] items-center justify-center border-r border-[#7b90a6] bg-gradient-to-b from-[#d6e4f1] to-[#a9c3dd]"><i className="mt-[5px] h-[4px] w-[11px] border border-[#64778a] bg-white" /></span>
        <span className="flex w-[24px] items-center justify-center border-r border-[#7b90a6] bg-gradient-to-b from-[#d6e4f1] to-[#a9c3dd]"><i className="flex h-[9px] w-[11px] items-center justify-center border border-[#64778a] bg-white"><b className="h-[4px] w-[5px] border border-[#64778a]" /></i></span>
        <span className="flex w-[37px] items-center justify-center bg-gradient-to-b from-[#e2968a] via-[#c4432f] to-[#d2614c]">
          <svg viewBox="0 0 10 10" className="size-[10px]"><path d="M1 1l8 8M9 1L1 9" stroke="#6d3a36" strokeWidth="3.400" /><path d="M1 1l8 8M9 1L1 9" stroke="#fff" strokeWidth="2" /></svg>
        </span>
      </div>
    </div>
    <div className="flex flex-1 flex-col border border-[#5c7288] bg-white">
      <div className="flex h-[21px] shrink-0 items-center bg-[#f1f1f1] pb-[1px] pl-[1px]">
        {DTOOLS.map(([n, dim], i) =>
          n === "|" ? <span key={i} className="mx-[2.500px] h-[13px] w-[1px] bg-[#dcdcdc]" /> : <span key={i} className="flex w-[17.100px] justify-center"><Icon n={n} s={11} dim={dim} /></span>
        )}
      </div>
      <div className="flex text-[10.100px] leading-none tracking-[-0.280px] text-[#2a2a2a]">
        <div className="w-[8.500px] shrink-0 border-r border-[#d0d0d0] bg-[#f4f4f4]">
          <div className="h-[18px] border-b border-[#c8c8c8]" />
          <div className="flex h-[25px] items-center pl-[1px]">1</div>
          <div className="flex h-[26px] items-center pl-[1px]">2</div>
          <div className="h-[14px]" />
        </div>
        {COLS.map(([w, h, a, b], i) => (
          <div key={h} className={`${w} shrink-0 whitespace-nowrap`}>
            <div className="flex h-[18px] items-center justify-center border-b border-r border-[#cfcfcf] bg-gradient-to-b from-white to-[#f0f0f0] text-[10.300px]">
              {h}{h === "areaHa" && <svg viewBox="0 0 8 5" className="mb-[4px] ml-[2px] h-[4px] w-[6px]"><path d="M0 5h8L4 0z" fill="#444" /></svg>}
            </div>
            {[a, b].map((v, r) => (
              <div key={r} className={`flex items-center border-b border-r border-[#d2d0cd] px-[2px] ${r ? "h-[26px] bg-[#e7e5e2]" : "h-[25px]"} ${NUM.has(h) ? "justify-end" : ""} ${!r && !i ? "bg-[#edf3fc] outline-2 -outline-offset-1 outline-[#2fdc7d]" : ""}`}>{v}</div>
            ))}
          </div>
        ))}
        <div className="h-[18px] flex-1 border-b border-[#e4e4e4] bg-[#f4f4f4]" />
      </div>
      <div className="flex flex-1 items-center justify-between border-t border-[#d8d8d8] bg-[#f0f0f0] pb-[2px] pl-[2px] pr-[2px]">
        <span className="flex h-[17px] w-[98px] items-center border border-[#c2c2c2] bg-[#f7f7f7] pl-[4px] text-[9.700px] tracking-[-0.400px] text-[#222]">
          <Icon n="funnel" s={11} /><span className="ml-[3px] whitespace-nowrap">Show All Features</span>
          <svg viewBox="0 0 8 5" className="mt-[9px] h-[4px] w-[5px] shrink-0"><path d="M0 0h8L4 5z" fill="#444" /></svg>
        </span>
        <span className="flex gap-[1px]">
          <span className="flex h-[17px] w-[19px] items-center justify-center border border-[#c8ccd0] bg-[#f7f9fb]"><Icon n="form" s={12} /></span>
          <span className="flex h-[17px] w-[19px] items-center justify-center border border-[#b5b5b5] bg-[#dcdcdc]"><Icon n="table" s={12} /></span>
        </span>
      </div>
    </div>
  </div>
);

const ARROWS = [[725, 168, 708, 265], [805, 165, 788, 265], [924, 168, 901, 259], [976, 168, 1009, 261], [1154, 170, 975, 264], [1154, 170, 1064, 265]];
const ArrowLine = ({ a }: { a: number[] }) => {
  const [x1, y1, x2, y2] = a;
  const l = Math.hypot(x2 - x1, y2 - y1);
  const ux = (x2 - x1) / l, uy = (y2 - y1) / l;
  const bx = x2 - ux * 10, by = y2 - uy * 10;
  return (
    <>
      <path d={`M${x1} ${y1}L${bx} ${by}`} stroke="#f00" strokeWidth="1.600" />
      <path d={`M${x2} ${y2}L${bx - uy * 5} ${by + ux * 5}L${bx + uy * 5} ${by - ux * 5}Z`} fill="#f00" />
    </>
  );
};

const MENU: [string, string, string][] = [
  ["Pro", "j", "ect"], ["", "E", "dit"], ["", "V", "iew"], ["", "L", "ayer"], ["", "S", "ettings"], ["", "P", "lugins"],
  ["Vect", "o", "r"], ["", "R", "aster"], ["", "D", "atabase"], ["", "W", "eb"], ["Pro", "c", "essing"], ["", "H", "elp"],
];

export default function App() {
  return (
    <div className="relative h-[729px] w-[1341px] overflow-hidden bg-white pl-[7px] pt-[14px] font-['Noto_Sans','Open_Sans',sans-serif] text-[#222]">
      <div className="flex h-[709px] w-[1320px] flex-col border-b border-[#8492a5] bg-[#f0f0f0]">
        {/* title bar */}
        <div className="flex h-[19px] shrink-0 items-center border-b border-[#a2a2a2] bg-[linear-gradient(60deg,#fff_0%,#fff_23%,#f3f3f3_25%,#fff_30%,#f1f1f1_32%,#fafafa_40%,#fff_56%,#ededed_59%,#fff_60%,#efefef_63%,#fff_66%,#fff_72%,#f3f3f3_75%,#fff_82%,#fff_100%)]">
          <Icon n="q" s={13} />
          <span className="ml-[4px] flex-1 text-[10.300px] tracking-[-0.250px] text-[#222]">*CLCw - QGIS</span>
          <div className="mr-[2px] flex h-[15px] w-[87px] self-start rounded-b-[3px] border border-t-0 border-[#9b9b9b]">
            <span className="flex w-[24px] items-end justify-center border-r border-[#ccc] pb-[3px]"><i className="h-[4px] w-[12px] border border-[#888]" /></span>
            <span className="flex w-[23px] items-center justify-center border-r border-[#ccc]"><svg viewBox="0 0 12 12" className="size-[12px]" fill="none" stroke="#777"><path d="M3.500 2.500V.5h8v8h-2M.5 2.500h9v9h-9zM3 5.500h4v3H3z" /></svg></span>
            <span className="flex flex-1 items-center justify-center"><svg viewBox="0 0 10 10" className="size-[10px]"><path d="M1 1l8 8M9 1L1 9" stroke="#666" strokeWidth="3.200" /><path d="M1 1l8 8M9 1L1 9" stroke="#fff" strokeWidth="1.600" /></svg></span>
          </div>
        </div>
        {/* menu */}
        <div className="flex h-[17px] shrink-0 items-center gap-[11px] border-b border-[#d4d4d4] pl-[7px] text-[9.900px] tracking-[-0.200px] text-[#9a9a9a]">
          {MENU.map(([a, u, b]) => <span key={a + u + b}>{a}<u>{u}</u>{b}</span>)}
        </div>
        {/* toolbar one */}
        <div className="flex h-[27px] shrink-0 items-center border-b border-[#cfcfcf] bg-gradient-to-b from-[#fbfbfb] to-[#eee]">
          <Grip c="w-[10px]" />
          <Cells names={["new", "open", "save", "saveas", "layout", "layoutmgr", "style"]} />
          <Grip c="w-[12px]" />
          <span className="flex h-[23px] w-[23px] shrink-0 items-center justify-center rounded-[2px] border border-[#b5b5b5] bg-[#dedede]"><Icon n="hand" /></span>
          <Cells names={["pan", "zin", "zout", "z1", "zfull", "zsel", "zlayer", "zlast", "znext", "bmnew", "bmnew2", "bm", "refresh"]} />
          <Grip c="w-[12px]" />
          <Cells names={["info", "action"]} /><Down g />
          <Cells names={["select"]} /><Down c="w-[10px]" />
          <Cells names={["expr"]} /><Down c="w-[10px]" />
          <Cells names={["desel", "table", "abacus", "gear", "sigma", "ruler"]} /><Down c="w-[10px]" />
          <Cells names={["tip", "text"]} /><Down c="w-[10px]" />
        </div>
        {/* toolbar two */}
        <div className="flex h-[27px] shrink-0 items-center border-b border-[#bdbdbd] bg-gradient-to-b from-[#fbfbfb] to-[#eee]">
          <Grip c="w-[10px]" />
          <Cells names={["abc", "diag", "abcpin", "abcg1", "abcg2", "abcg3", "abcg4", "abcg5"]} />
          <Grip c="w-[12px]" />
          <Cells names={["pens", "pencil", "saveg", "shapeg", "vert"]} /><Down c="w-[10px]" g />
          <Cells names={["edit", "trash", "cut", "copy", "paste", "undo", "redo"]} />
          <Grip c="w-[13px]" />
          <Cells names={["setsq", "shapeg"]} /><Down c="w-[10px]" g />
          <Cells names={["shapeh", "chain", "shapei", "split", "shapeg"]} />
          <span className="w-[14px] text-center text-[12px] font-bold leading-none text-[#222]">»</span>
          <Grip c="w-[12px]" />
          <span className="flex-1" />
          <Grip c="w-[9px]" />
          <span className="flex h-[22px] w-[22px] items-center justify-center rounded-[2px] border border-[#b5b5b5] bg-[#dedede]"><Icon n="magnet" /></span>
          {["snapv", "snapd"].map((n) => <span key={n} className="flex w-[23px] items-center justify-center"><Icon n={n} s={15} /><svg viewBox="0 0 8 5" className="-ml-[3px] mt-[13px] h-[4px] w-[6px]"><path d="M0 0h8L4 5z" fill="#555" /></svg></span>)}
          <span className="flex h-[15px] w-[71px] items-center border border-[#b5b5b5] bg-white text-[9px] tracking-[-0.200px]"><span className="flex-1 pl-[3px]">1,00</span><Spin /></span>
          <span className="ml-[1px] flex h-[17px] w-[49px] items-center rounded-[2px] border border-[#b5b5b5] bg-[#f6f6f6] pl-[3px] text-[9.200px] tracking-[-0.350px]"><span className="flex-1">meters</span><Down c="w-[18px]" /></span>
          <span className="flex w-[23px] justify-center"><Icon n="topo" s={14} /></span>
          <span className="flex h-[22px] w-[22px] items-center justify-center rounded-[2px] border border-[#b5b5b5] bg-[#dedede]"><Icon n="inter" /></span>
          <span className="flex w-[23px] justify-center"><Icon n="trace" s={15} /></span>
          <Down c="w-[10px]" />
          <span className="w-[53px]" />
        </div>

        {/* body */}
        <div className="flex h-[601px] shrink-0">
          <div className="flex w-[37px] shrink-0 flex-col bg-gradient-to-r from-[#fbfbfb] to-[#ececec] pt-[9px]">
            {["vadd", "rasteradd", "comma", "feathadd", "vbox", "pgadd", "wmsadd", "wcsadd", "wfsadd", "vnew"].map((n, i) => (
              <span key={n} className="flex h-[22px] items-center pl-[5px]"><Icon n={n} s={17} />{[5, 6, 8, 9].includes(i) && <span className="ml-[4px]"><Down c="w-[7px]" /></span>}</span>
            ))}
          </div>
          <div className="flex w-[212px] shrink-0 flex-col border-l border-[#b9b9b9]">
            <PanelHead t="Browser" />
            <div className="flex h-[20px] shrink-0 items-center gap-[6px] pb-[2px] pl-[5px]">
              {["addsel", "refresh", "funnel", "collapse", "infob"].map((n) => <Icon key={n} n={n} s={11} />)}
            </div>
            <div className="flex h-[146px] w-[211px] shrink-0 border border-[#c6c6c6] bg-white">
              <div className="flex-1 overflow-hidden">
                {BROWSER.map(([ic, t, ar]) => (
                  <div key={t} className="flex h-[15.150px] items-center text-[10.300px] tracking-[-0.320px]">
                    <span className="ml-[6px] w-[14px]">{ar && <Right />}</span>
                    <Icon n={ic} s={13} /><span className="ml-[4px] leading-[15px]">{t}</span>
                  </div>
                ))}
              </div>
              <div className="flex w-[13px] flex-col border-l border-[#d0d0d0] bg-[#e4e4e4]">
                <span className="flex h-[11px] items-center justify-center border-b border-[#ccc] bg-[#f7f7f7]"><svg viewBox="0 0 8 5" className="h-[4px] w-[7px]"><path d="M0 5h8L4 0z" fill="#555" /></svg></span>
                <span className="h-[50px] border-b border-[#ccc] bg-[#fafafa]" />
                <span className="flex-1" />
                <span className="flex h-[12px] items-center justify-center border-t border-[#ccc] bg-[#f7f7f7]"><Down c="w-[7px]" /></span>
              </div>
            </div>
            <div className="h-[5px] shrink-0" />
            <PanelHead t="Layers" />
            <div className="flex h-[19px] shrink-0 items-center gap-[6px] pb-[1px] pl-[5px]">
              {["brush", "group", "eye", "funnel", "eps"].map((n) => <Icon key={n} n={n} s={11} />)}
              <Down c="w-[9px]" />
              {["expand", "collapse", "remove"].map((n) => <Icon key={n} n={n} s={11} />)}
            </div>
            <div className="w-[211px] flex-1 border border-[#c6c6c6] bg-white">
              {LAYERS.map((l) => (
                <div key={l.t} className={`flex h-[15.200px] items-center ${l.sel ? "bg-[#f0f0f0]" : ""}`}>
                  <span className={`${l.sub ? "w-[36px]" : "w-[19px]"} shrink-0 pl-[5px]`}>{l.arrow === "r" ? <Right /> : l.arrow ? <Down c="w-[7px]" /> : null}</span>
                  {l.check === null ? null : <Check on={l.check} />}
                  <span className={l.check === null ? "flex w-[15.500px] shrink-0" : "ml-[3px] flex w-[16px] shrink-0 items-center justify-center"}>
                    {l.icon && <Icon n={l.icon} s={13} />}
                    {l.sw && <span className={`size-[12.500px] shrink-0 border border-[#555] ${l.sw}`} />}
                    {l.line && <span className={`w-[12px] ${l.line}`} />}
                  </span>
                  <span className={`ml-[1.500px] whitespace-nowrap text-[10.300px] leading-[15px] ${l.k}`}>{l.t}</span>
                </div>
              ))}
            </div>
          </div>
          <div className="w-[3px] shrink-0" />
          <div className="flex-1 overflow-hidden border-l border-r border-[#a9a9a9] bg-white"><MapCanvas /></div>
        </div>

        {/* status bar */}
        <div className="flex h-[18px] shrink-0 items-center whitespace-nowrap pb-[1px] text-[8.900px] tracking-[-0.280px]">
          <span className="ml-[2px] flex h-[16px] w-[162px] items-center gap-[5px] rounded-[2px] border border-[#adadad] bg-white pl-[5px] tracking-[-0.100px] text-[#888]"><Icon n="search" s={10} />Type to locate (Ctrl+K)</span>
          <span className="ml-[5px] flex-1 text-black">1 legend entries removed.</span>
          <span className="w-[42px]">Coordinate</span>
          <span className="ml-[2px] flex h-[16px] w-[66px] items-center justify-center border border-[#bcbcbc] bg-white">78917,-27159</span>
          <span className="ml-[3px]"><Icon n="mouse" s={13} /></span>
          <span className="ml-[9px] w-[23px]">Scale</span>
          <span className="ml-[2px] flex h-[16px] w-[63px] items-center border border-[#bcbcbc] bg-white pl-[2px]"><span className="flex-1">1:221485</span><Down c="w-[20px]" /></span>
          <span className="ml-[8px]"><Icon n="lock" s={11} /></span>
          <span className="ml-[6px] w-[37px]">Magnifier</span>
          <span className="ml-[2px] flex h-[16px] w-[64px] items-center border border-[#bcbcbc] bg-white pl-[3px]"><span className="flex-1">100%</span><Spin /></span>
          <span className="ml-[6px] w-[32px]">Rotation</span>
          <span className="ml-[6px] flex h-[16px] w-[62px] items-center border border-[#bcbcbc] bg-white pl-[3px]"><span className="flex-1">0,0 °</span><Spin /></span>
          <span className="ml-[4px]"><Check on /></span>
          <span className="ml-[4px] w-[29px]">Render</span>
          <span className="ml-[11px]"><Icon n="globeg" s={12} /></span>
          <span className="ml-[3px] w-[44px]">EPSG:3763</span>
          <span className="ml-[13px]"><Icon n="bubble" s={14} /></span>
          <span className="ml-[9px] mr-[3px]"><Icon n="puzzle" s={14} /></span>
        </div>
      </div>

      <Dialog />

      {/* annotations */}
      <svg viewBox="0 0 1341 729" className="pointer-events-none absolute left-0 top-0 h-[729px] w-[1341px]" fill="none">
        {ARROWS.map((a, i) => <ArrowLine key={i} a={a} />)}
        <path d="M636 424.500L724 438.500M644 524L722 584" stroke="#f00" strokeWidth="1.500" />
      </svg>
      <div className="absolute left-[710px] top-[212px] h-[20px] w-[87px] rounded-[4px] border-[1.500px] border-[#f00]" />
      <div className="absolute left-[698px] top-[128px] whitespace-nowrap text-[25.500px] leading-[36px] tracking-[0.200px] text-[#f00]">Inappropriate attributes!</div>
      <div className="absolute left-[1066px] top-[128px] whitespace-nowrap text-[25.500px] leading-[36px] tracking-[0.350px] text-[#f00]">Wrong values!</div>
      <div className="absolute left-[724px] top-[376px] h-[128px] w-[446px] whitespace-nowrap border-2 border-[#e8141c] bg-white pl-[11px] pt-[8px] text-[25.500px] leading-[36px] tracking-[0.200px] text-[#f00]">
        <div>Geometry is polygon multipart</div><div>(each feature is composed by</div><div>more than one polygon)</div>
      </div>
      <div className="absolute left-[721px] top-[522px] h-[128px] w-[534px] whitespace-nowrap border-2 border-[#e8141c] bg-white pl-[12px] pt-[9px] text-[25.500px] leading-[36px] tracking-[0.200px] text-[#f00]">
        <div>The borders of adjacent polygons with</div><div>equal CLCl1code <b className="underline">and</b> CLC1_l1description</div><div>attribute values were erased</div>
      </div>
    </div>
  );
}
